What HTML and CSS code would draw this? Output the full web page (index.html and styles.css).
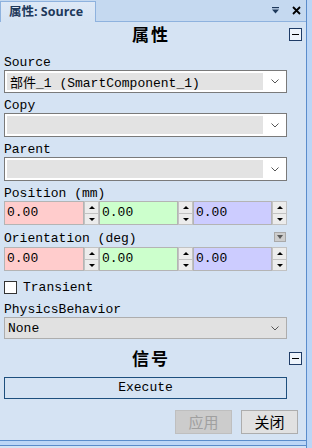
FILE: index.html
```html
<!DOCTYPE html>
<html lang="zh-CN">
<head>
  <meta charset="UTF-8">
  <title>属性: Source</title>
  <link rel="stylesheet" href="styles.css">
</head>
<body>
  <div class="window">
    <div class="pane">
      <div class="titlebar">
        <div class="tab">属性: Source</div>
        <div class="tools">
          <svg class="tool" width="8" height="8" viewBox="0 0 8 8">
            <rect x="0" y="0" width="7" height="1.2" fill="#1e395b"/>
            <polygon points="0,2.5 7,2.5 3.5,6.5" fill="#1e395b"/>
          </svg>
          <svg class="tool" width="9" height="9" viewBox="0 0 9 9">
            <path d="M1 1 L8 8 M8 1 L1 8" stroke="#000" stroke-width="1.8"/>
          </svg>
        </div>
      </div>

      <div class="section-head">
        <span></span>
        <h2>属性</h2>
        <span class="collapse"><i></i></span>
      </div>

      <div class="content">
        <div class="label first">Source</div>
        <div class="combo short">
          <div class="combo-value">部件_1 (SmartComponent_1)</div>
          <svg class="chev" width="8" height="5" viewBox="0 0 8 5"><polyline points="0.5,0.5 4,4 7.5,0.5" fill="none" stroke="#555" stroke-width="1"/></svg>
        </div>

        <div class="label">Copy</div>
        <div class="combo">
          <div class="combo-value"></div>
          <svg class="chev" width="8" height="5" viewBox="0 0 8 5"><polyline points="0.5,0.5 4,4 7.5,0.5" fill="none" stroke="#555" stroke-width="1"/></svg>
        </div>

        <div class="label">Parent</div>
        <div class="combo">
          <div class="combo-value"></div>
          <svg class="chev" width="8" height="5" viewBox="0 0 8 5"><polyline points="0.5,0.5 4,4 7.5,0.5" fill="none" stroke="#555" stroke-width="1"/></svg>
        </div>

        <div class="label">Position (mm)</div>
        <div class="vector">
          <div class="num red">0.00</div>
          <div class="spin"><span class="up"></span><span class="down"></span></div>
          <div class="num green">0.00</div>
          <div class="spin"><span class="up"></span><span class="down"></span></div>
          <div class="num blue">0.00</div>
          <div class="spin"><span class="up"></span><span class="down"></span></div>
        </div>

        <div class="label label-row">
          <span>Orientation (deg)</span>
          <span class="expander"></span>
        </div>
        <div class="vector">
          <div class="num red">0.00</div>
          <div class="spin"><span class="up"></span><span class="down"></span></div>
          <div class="num green">0.00</div>
          <div class="spin"><span class="up"></span><span class="down"></span></div>
          <div class="num blue">0.00</div>
          <div class="spin"><span class="up"></span><span class="down"></span></div>
        </div>

        <div class="check-row">
          <span class="checkbox"></span>
          <span>Transient</span>
        </div>

        <div class="label tight">PhysicsBehavior</div>
        <div class="combo flat">
          <div class="combo-value">None</div>
          <svg class="chev" width="8" height="5" viewBox="0 0 8 5"><polyline points="0.5,0.5 4,4 7.5,0.5" fill="none" stroke="#555" stroke-width="1"/></svg>
        </div>
      </div>

      <div class="section-head signal">
        <span></span>
        <h2>信号</h2>
        <span class="collapse"><i></i></span>
      </div>

      <div class="content">
        <div class="execute">Execute</div>
      </div>

      <div class="actions">
        <button class="btn" disabled>应用</button>
        <button class="btn">关闭</button>
      </div>

      <div class="footer"></div>
    </div>
  </div>
</body>
</html>
```

FILE: styles.css
```css
html, body {
  margin: 0;
  padding: 0;
}

body {
  width: 312px;
  height: 448px;
  overflow: hidden;
  background: #bcd6f6;
  font-family: "Liberation Mono", "Noto Sans CJK SC", monospace;
  font-size: 13px;
  color: #000;
}

.window {
  display: flex;
  height: 448px;
}

.pane {
  width: 306px;
  height: 448px;
  border-right: 1px solid #5a8ccb;
  background: #d5e3f3;
  display: flex;
  flex-direction: column;
}

/* 상단 탭 */
.titlebar {
  flex-shrink: 0;
  height: 21px;
  background: #c5d9f0;
  border-bottom: 1px solid #8eb2de;
  display: flex;
  align-items: flex-end;
}

.tab {
  box-sizing: border-box;
  width: 96px;
  height: 21px;
  margin-bottom: -1px;
  padding-left: 8px;
  border: 1px solid #8eb2de;
  border-bottom: none;
  background: linear-gradient(#dfe9f6, #d5e3f3);
  font-family: "Open Sans", "Noto Sans CJK SC", sans-serif;
  font-weight: 700;
  font-size: 12.5px;
  line-height: 19px;
  color: #1e395b;
  white-space: nowrap;
}

.tools {
  margin-left: auto;
  align-self: center;
  display: flex;
  align-items: center;
  gap: 12px;
  padding-right: 5px;
}

.tool {
  display: block;
}

/* 섹션 제목 */
.section-head {
  flex-shrink: 0;
  display: grid;
  grid-template-columns: 1fr auto 1fr;
  align-items: center;
  height: 24px;
  padding-right: 4px;
}

.section-head h2 {
  margin: 0;
  font-family: "Noto Sans CJK SC", sans-serif;
  font-size: 17px;
  font-weight: 700;
  letter-spacing: 2px;
  line-height: 24px;
}

.section-head.signal {
  margin-top: 7px;
}

.collapse {
  justify-self: end;
  box-sizing: border-box;
  width: 13px;
  height: 13px;
  border: 1px solid #1f3c66;
  background: #eef4fb;
  display: flex;
  align-items: center;
  justify-content: center;
}

.collapse i {
  display: block;
  width: 7px;
  height: 1px;
  background: #000;
}

.content {
  flex-shrink: 0;
  padding: 0 19px 0 4px;
}

.label {
  box-sizing: border-box;
  height: 20px;
  display: flex;
  align-items: flex-end;
  line-height: 14px;
  white-space: nowrap;
}

.label.first {
  height: 24px;
}

.label.tight {
  height: 14px;
}

.label-row {
  justify-content: space-between;
  align-items: flex-start;
  height: 22px;
  padding-top: 7px;
}

.expander {
  box-sizing: border-box;
  width: 12px;
  height: 10px;
  margin-right: 1px;
  border: 1px solid #a9a9a9;
  background: #cdcdcd;
  position: relative;
}

.expander::after {
  content: '';
  position: absolute;
  left: 2px;
  top: 2px;
  border-left: 3px solid transparent;
  border-right: 3px solid transparent;
  border-top: 4px solid #5a5a5a;
}

/* 콤보 박스 */
.combo {
  box-sizing: border-box;
  height: 24px;
  border: 1px solid #7a7a7a;
  background: #fff;
  display: flex;
  align-items: center;
  padding: 2px;
}

.combo.short {
  height: 23px;
}

.combo-value {
  flex: 1;
  align-self: stretch;
  background: #e3e3e3;
  display: flex;
  align-items: center;
  padding-left: 3px;
  white-space: nowrap;
}

.chev {
  margin: 0 5px 0 8px;
}

.combo.flat {
  height: 22px;
  border-color: #adadad;
  background: #e1e1e1;
}

.combo.flat .combo-value {
  background: transparent;
  padding-left: 1px;
}

/* 숫자 입력 */
.vector {
  display: grid;
  grid-template-columns: 80px 15px 79px 15px 79px 15px;
  height: 24px;
}

.num {
  box-sizing: border-box;
  border: 1px solid #b4b4b4;
  padding-left: 2px;
  line-height: 22px;
}

.red { background: #ffcccc; }
.green { background: #ccffcc; }
.blue { background: #ccccff; }

.spin {
  display: flex;
  flex-direction: column;
}

.spin span {
  flex: 1;
  box-sizing: border-box;
  border: 1px solid #c2c2c2;
  background: #ececec;
  position: relative;
}

.spin .down {
  border-top: none;
}

.spin span::after {
  content: '';
  position: absolute;
  left: 4px;
  top: 4px;
  border-left: 3px solid transparent;
  border-right: 3px solid transparent;
}

.spin .up::after {
  border-bottom: 3px solid #000;
}

.spin .down::after {
  top: 4px;
  border-top: 3px solid #000;
}

/* 체크박스 */
.check-row {
  display: flex;
  align-items: center;
  gap: 6px;
  height: 32px;
}

.checkbox {
  box-sizing: border-box;
  width: 13px;
  height: 13px;
  border: 1px solid #333;
  background: #fff;
}

.execute {
  box-sizing: border-box;
  height: 22px;
  margin-top: 7px;
  border: 1px solid #1e4f7d;
  text-align: center;
  line-height: 20px;
}

.actions {
  flex-shrink: 0;
  display: flex;
  justify-content: flex-end;
  gap: 9px;
  padding: 11px 8px 0 0;
}

.btn {
  box-sizing: border-box;
  width: 57px;
  height: 24px;
  margin: 0;
  padding: 0;
  border: 1px solid #adadad;
  background: #e1e1e1;
  font-family: "Noto Sans CJK SC", sans-serif;
  font-size: 15px;
  line-height: 22px;
  color: #000;
}

.btn:disabled {
  border-color: #bfbfbf;
  background: #cccccc;
  color: #a0a0a0;
}

.footer {
  flex-shrink: 0;
  margin-top: auto;
  margin-bottom: 2px;
  height: 4px;
  border-top: 1px solid #5a8ccb;
  border-bottom: 1px solid #5a8ccb;
  background: #bcd6f6;
}
```
